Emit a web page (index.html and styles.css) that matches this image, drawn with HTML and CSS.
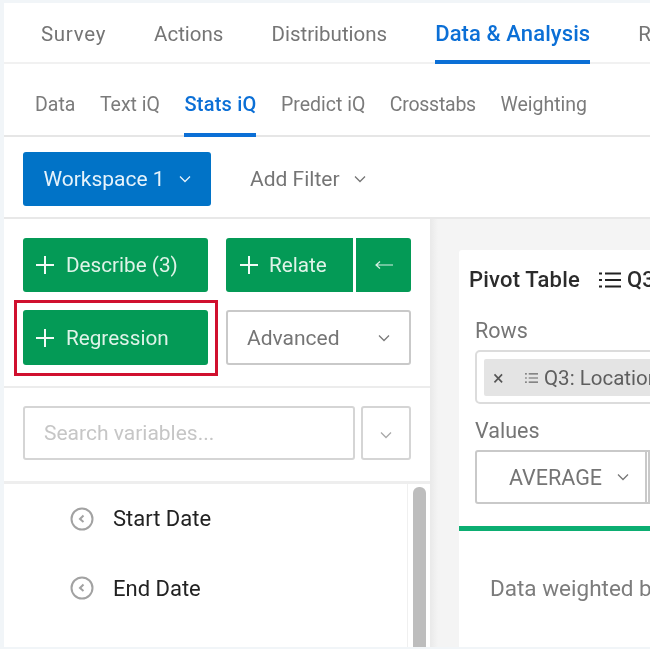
FILE: index.html
```html
<!DOCTYPE html>
<html lang="en">
<head>
<meta charset="utf-8">
<title>Stats iQ</title>
<link rel="stylesheet" href="styles.css">
</head>
<body>
<div class="frame">
  <nav class="tabs">
    <a class="tab first">Survey</a>
    <a class="tab">Actions</a>
    <a class="tab">Distributions</a>
    <a class="tab active">Data &amp; Analysis</a>
    <a class="tab">Results</a>
  </nav>
  <nav class="subtabs">
    <a class="subtab">Data</a>
    <a class="subtab">Text iQ</a>
    <a class="subtab active">Stats iQ</a>
    <a class="subtab">Predict iQ</a>
    <a class="subtab tight">Crosstabs</a>
    <a class="subtab">Weighting</a>
  </nav>
  <div class="toolbar">
    <button class="workspace">Workspace 1
      <svg class="chev" viewBox="0 0 12 8"><path d="M1 1.500l5 5 5-5"/></svg>
    </button>
    <button class="add-filter">Add Filter
      <svg class="chev" viewBox="0 0 12 8"><path d="M1 1.500l5 5 5-5"/></svg>
    </button>
  </div>
  <div class="main">
    <aside class="side">
      <div class="actions">
        <button class="green"><svg class="plus" viewBox="0 0 18 18"><path d="M9 0v18M0 9h18"/></svg>Describe (3)</button>
        <div class="split">
          <button class="green relate"><svg class="plus" viewBox="0 0 18 18"><path d="M9 0v18M0 9h18"/></svg>Relate</button>
          <button class="green back"><svg class="arrow" viewBox="0 0 18 10"><path d="M18 5H1M5 1.500L1 5l4 3.500"/></svg></button>
        </div>
        <button class="green marked"><svg class="plus" viewBox="0 0 18 18"><path d="M9 0v18M0 9h18"/></svg>Regression</button>
        <button class="advanced">Advanced
          <svg class="chev" viewBox="0 0 12 8"><path d="M1 1.500l5 5 5-5"/></svg>
        </button>
      </div>
      <div class="search">
        <div class="search-input">Search variables...</div>
        <button class="search-menu"><svg class="chev" viewBox="0 0 12 8"><path d="M1 1.500l5 5 5-5"/></svg></button>
      </div>
      <div class="vars">
        <ul class="var-list">
          <li class="var"><svg class="clock" viewBox="0 0 24 24"><circle cx="12" cy="12" r="10.500"/><path d="M13.500 8.500L10 12l3.500 3"/></svg>Start Date</li>
          <li class="var"><svg class="clock" viewBox="0 0 24 24"><circle cx="12" cy="12" r="10.500"/><path d="M13.500 8.500L10 12l3.500 3"/></svg>End Date</li>
        </ul>
        <div class="scroll"><div class="thumb"></div></div>
      </div>
    </aside>
    <section class="canvas">
      <article class="card">
        <header class="card-head">
          <span class="card-title">Pivot Table</span>
          <svg class="list-big" viewBox="0 0 22 18"><path d="M6 2.500h16M6 9h16M6 15.500h16M0 2.500h3M0 9h3M0 15.500h3"/></svg>
          <span class="card-q">Q3: Location</span>
        </header>
        <div class="field-label">Rows</div>
        <div class="rows-box">
          <div class="chip">
            <span class="chip-x">×</span>
            <svg class="list-small" viewBox="0 0 14 12"><path d="M4 1.500h10M4 6h10M4 10.500h10M0 1.500h2M0 6h2M0 10.500h2"/></svg>
            <span class="chip-text">Q3: Location</span>
          </div>
        </div>
        <div class="field-label values">Values</div>
        <div class="values-row">
          <div class="avg">AVERAGE
            <svg class="chev" viewBox="0 0 12 8"><path d="M1 1.500l5 5 5-5"/></svg>
          </div>
          <div class="avg-next"></div>
        </div>
        <div class="rule"></div>
        <p class="note">Data weighted by Weight</p>
      </article>
    </section>
  </div>
</div>
</body>
</html>
```

FILE: styles.css
```css
* { box-sizing: border-box; }
html, body { margin: 0; height: 649px; overflow: hidden; background: #f1f5f8; }
body { font-family: Roboto, "Open Sans", sans-serif; color: #6f6f6f; }
button { font: inherit; margin: 0; cursor: pointer; }

.frame {
  width: 646px;
  height: 644px;
  margin: 3px 0 0 4px;
  background: #fff;
  display: flex;
  flex-direction: column;
  overflow: hidden;
  filter: blur(0.45px);
}

.tabs {
  flex: 0 0 61px;
  display: flex;
  gap: 48px;
  padding-left: 37px;
  border-bottom: 2px solid #f1f1f1;
  font-size: 20.500px;
  white-space: nowrap;
}
.tab { height: 61px; margin-bottom: -2px; line-height: 62px; color: #757575; }
.tab.first { letter-spacing: 0.7px; }
.tab.active { color: #0b6fd6; font-size: 22px; font-weight: 500; letter-spacing: 0.1px; border-bottom: 4px solid #0b6fd6; }

.subtabs {
  flex: 0 0 73px;
  display: flex;
  gap: 24.500px;
  padding-left: 31px;
  border-bottom: 2px solid #e6e6e6;
  font-size: 19.500px;
  white-space: nowrap;
}
.subtab { height: 73px; margin-bottom: -2px; line-height: 81px; color: #7b7b7b; }
.subtab.tight { letter-spacing: -0.25px; }
.subtab.active { color: #0b6fd6; font-size: 20px; font-weight: 500; letter-spacing: 0.2px; border-bottom: 4px solid #0b6fd6; }

.toolbar {
  flex: 0 0 82px;
  display: flex;
  align-items: center;
  gap: 39px;
  padding: 4px 0 0 19px;
  border-bottom: 2px solid #e8e8e8;
}
.chev { width: 12px; height: 8px; fill: none; stroke: currentColor; stroke-width: 1.300; }
.workspace {
  width: 188px;
  height: 54px;
  display: flex;
  align-items: center;
  justify-content: center;
  gap: 14px;
  border: 0;
  border-radius: 3px;
  background: #0173c7;
  color: #e6f3fb;
  font-size: 21px;
}
.add-filter {
  display: flex;
  align-items: center;
  gap: 14px;
  padding: 0;
  border: 0;
  background: none;
  color: #757575;
  font-size: 21px;
}

.main { flex: 1; min-height: 0; display: flex; }

.side {
  flex: 0 0 426px;
  display: flex;
  flex-direction: column;
}
.actions {
  display: grid;
  grid-template-columns: 185px 185px;
  grid-template-rows: 54px 55px;
  gap: 18px;
  padding: 19px 0 21px 19px;
  border-bottom: 2px solid #ececec;
}
.green {
  display: flex;
  align-items: center;
  border: 0;
  border-radius: 3px;
  background: #049a56;
  color: #dff3e8;
  font-size: 20.700px;
  padding: 0 0 0 13px;
}
.plus { width: 18px; height: 18px; margin-right: 12px; fill: none; stroke: #f2fbf6; stroke-width: 2; }
.split { display: flex; gap: 3px; }
.relate { flex: 0 0 127px; border-radius: 3px 0 0 3px; padding-left: 14px; }
.relate .plus { margin-right: 11px; }
.back { flex: 1; border-radius: 0 3px 3px 0; padding: 0; justify-content: center; }
.arrow { width: 18px; height: 10px; fill: none; stroke: #d8f0e3; stroke-width: 1.200; }
.marked { position: relative; }
.marked::after {
  content: "";
  position: absolute;
  inset: -10px -10px -11px -9px;
  border: 3px solid #d0102e;
}
.advanced {
  display: flex;
  align-items: center;
  justify-content: space-between;
  padding: 0 19px;
  border: 2px solid #c9c9c9;
  border-radius: 3px;
  background: #fff;
  color: #757575;
  font-size: 21px;
}
.advanced .chev { color: #7a7a7a; }

.search {
  flex: 0 0 96px;
  display: flex;
  gap: 6px;
  padding: 18px 0 0 19px;
  border-bottom: 3px solid #eeeeee;
}
.search-input {
  width: 332px;
  height: 54px;
  padding-left: 19px;
  line-height: 50px;
  border: 2px solid #d5d5d5;
  border-radius: 3px;
  color: #c6c6c6;
  font-size: 21px;
}
.search-menu {
  width: 50px;
  height: 54px;
  padding: 0;
  border: 2px solid #d5d5d5;
  border-radius: 3px;
  background: #fff;
  color: #a9a9a9;
}

.vars { flex: 1; min-height: 0; display: flex; }
.var-list { flex: 1; margin: 0; padding: 0 0 0 66px; list-style: none; }
.var {
  height: 69.500px;
  display: flex;
  align-items: center;
  gap: 19px;
  color: #222;
  font-size: 22px;
}
.clock { width: 24px; height: 24px; fill: none; stroke: #a2a2a2; stroke-width: 2; }
.scroll { flex: 0 0 23px; padding: 3px 0 0 5px; border-left: 1px solid #f0f0f0; }
.thumb { width: 13px; height: 100%; border-radius: 6px 6px 0 0; background: #bdbdbd; }

.canvas {
  flex: 1;
  min-width: 0;
  padding: 31px 0 0 29px;
  background: linear-gradient(90deg, #e9e9e9, #f4f4f4 8px);
}
.card {
  height: 100%;
  background: #fff;
  border-radius: 3px 0 0 0;
  overflow: hidden;
  white-space: nowrap;
}
.card-head {
  height: 59px;
  display: flex;
  align-items: center;
  padding-left: 10px;
  color: #2b2b2b;
}
.card-title { font-size: 22px; font-weight: 500; letter-spacing: 0.2px; margin-right: 19px; }
.list-big { flex: none; width: 22px; height: 18px; margin-right: 6px; fill: none; stroke: #222; stroke-width: 2.200; }
.card-q { font-size: 22px; font-weight: 500; }
.field-label { height: 41px; padding: 6px 0 0 16px; font-size: 21.500px; line-height: 32px; color: #757575; }
.field-label.values { height: 46px; padding-top: 11px; }
.rows-box {
  width: 300px;
  height: 54px;
  margin-left: 16px;
  padding: 7px 0 0 7px;
  border: 2px solid #dcdcdc;
  border-radius: 5px;
}
.chip {
  height: 37px;
  display: flex;
  align-items: center;
  padding-left: 9px;
  border-radius: 2px;
  background: #e4e4e4;
  color: #5e5e5e;
  font-size: 20.500px;
}
.chip-x { width: 32px; color: #555; font-size: 20px; }
.list-small { flex: none; width: 13px; height: 12px; margin-right: 6px; fill: none; stroke: #666; stroke-width: 1.300; }
.values-row { display: flex; margin-left: 16px; height: 54px; }
.avg {
  flex: 0 0 172px;
  display: flex;
  align-items: center;
  gap: 15px;
  padding-left: 32px;
  border: 2px solid #c9c9c9;
  border-radius: 3px 0 0 3px;
  color: #757575;
  font-size: 21.500px;
}
.avg .chev { color: #777; }
.avg-next { flex: 1; border: 2px solid #c9c9c9; border-left: 0; }
.rule { height: 5px; margin-top: 22px; background: #0cae72; }
.note { margin: 44px 0 0 31px; font-size: 22.500px; line-height: 27px; color: #7c7c7c; }
```
